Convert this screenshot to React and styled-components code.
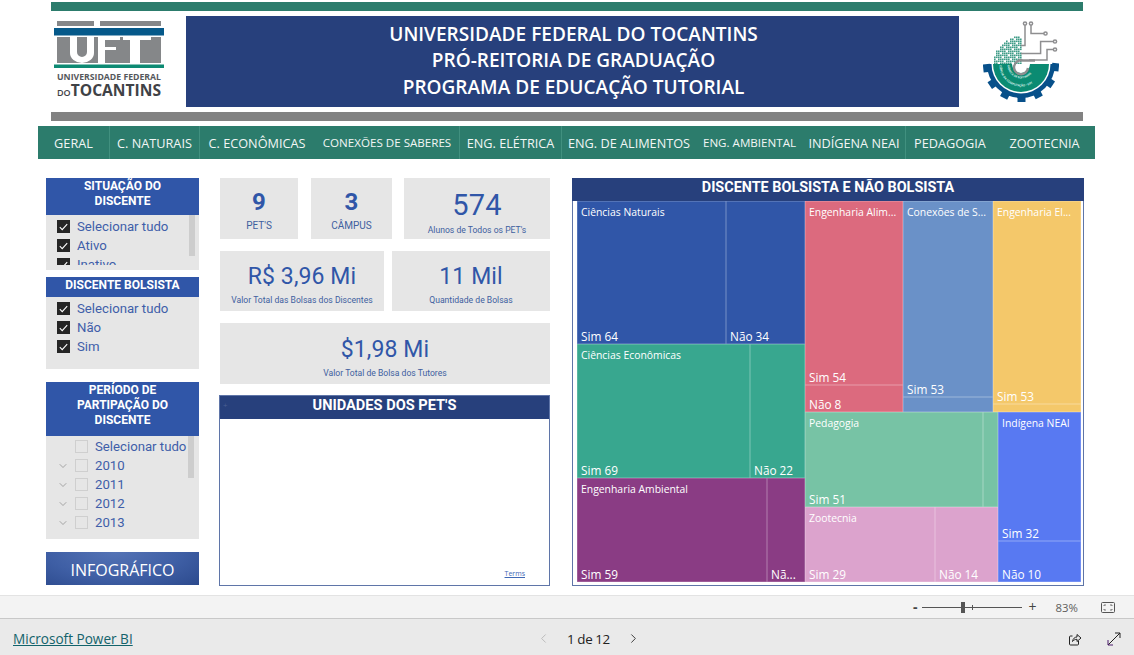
import React from "react";
import styled, { createGlobalStyle } from "styled-components";
import { ChevronDown, ChevronLeft, ChevronRight } from "lucide-react";

const GlobalStyle = createGlobalStyle`
  html, body {
    margin: 0;
    height: 100%;
    overflow: hidden;
    background: #fff;
    font-family: "Open Sans", "Liberation Sans", sans-serif;
  }
  * { box-sizing: border-box; }
`;

const NAVY = "#27407c";
const BLUE = "#3056a8";
const GREEN = "#2c7c6c";
const DIN = `"Roboto", "Liberation Sans", sans-serif`;

const Page = styled.div`
  width: 1134px;
  height: 655px;
  display: flex;
  flex-direction: column;
`;

const Report = styled.div`
  height: 595px;
  padding-top: 2px;
  display: flex;
  flex-direction: column;
`;

const Masthead = styled.header`
  width: 1032px;
  height: 119px;
  margin-left: 51px;
  border-top: 9px solid ${GREEN};
  border-bottom: 9px solid #828282;
  padding: 5px 0;
  display: flex;
  align-items: stretch;
`;

const UftLogo = styled.div`
  width: 135px;
  padding: 5px 0 0 3px;
  display: flex;
  flex-direction: column;
`;

const UftName = styled.span`
  width: 110px;
  margin-top: 4px;
  text-align: center;
  font: 700 8.7px/9px "Open Sans", sans-serif;
  color: #55585c;
  white-space: nowrap;
`;

const UftState = styled.span`
  width: 110px;
  margin-top: 1px;
  text-align: center;
  font: 700 15.6px/15px "Open Sans", sans-serif;
  color: #3f4246;
  white-space: nowrap;
  small { font-size: 9px; font-weight: 600; }
`;

const Banner = styled.div`
  width: 773px;
  padding: 0 0 2px 2px;
  background: ${NAVY};
  color: #fff;
  display: flex;
  flex-direction: column;
  align-items: center;
  justify-content: center;
  font-size: 19.06px;
  font-weight: 600;
  line-height: 26.5px;
  text-align: center;
`;

const SideLogo = styled.div`
  flex: 1;
  padding-left: 24px;
  display: flex;
  align-items: center;
`;

const Nav = styled.nav`
  width: 1057px;
  height: 33px;
  margin: 5px 0 0 38px;
  background: ${GREEN};
  display: grid;
  grid-template-columns: 72px 90px 115px 145px 102px 135px 106px 103px 89px 100px;
`;

const NavItem = styled.a`
  display: flex;
  align-items: center;
  justify-content: center;
  color: #f2f6f5;
  font-size: ${(p) => p.$size || 12.7}px;
  white-space: nowrap;
  border-right: 1px solid ${(p) => (p.$sep ? "#41907f" : "transparent")};
`;

const Content = styled.main`
  flex: 1;
  padding: 19px 0 0 46px;
  display: flex;
  align-items: flex-start;
`;

const LeftColumn = styled.div`
  width: 153px;
  display: flex;
  flex-direction: column;
`;

const Slicer = styled.section`
  height: ${(p) => p.$height}px;
  margin-bottom: ${(p) => p.$gap}px;
  background: #e6e6e6;
  display: flex;
  flex-direction: column;
  position: relative;
`;

const SlicerHead = styled.h3`
  margin: 0;
  height: ${(p) => p.$height}px;
  padding-top: 1px;
  flex-shrink: 0;
  background: ${BLUE};
  color: #fff;
  text-align: center;
  font: 700 12px/15px ${DIN};
`;

const SlicerList = styled.ul`
  margin: 0 0 ${(p) => p.$clip}px;
  padding: ${(p) => p.$top}px 0 0;
  list-style: none;
  flex: 1;
  overflow: hidden;
`;

const SlicerRow = styled.li`
  height: 19px;
  padding-left: 11px;
  display: flex;
  align-items: center;
  color: #3f5ea9;
  font: 400 13.2px/19px ${DIN};
  white-space: nowrap;
`;

const Twisty = styled.span`
  width: 18px;
  display: flex;
  color: #777;
`;

const Box = styled.span`
  width: 13px;
  height: 13px;
  margin-right: 7px;
  flex-shrink: 0;
  display: flex;
  align-items: center;
  justify-content: center;
  background: ${(p) => (p.$on ? "#252525" : "transparent")};
  border: 1px solid ${(p) => (p.$on ? "#252525" : "#cfcfcf")};
`;

const Thumb = styled.span`
  position: absolute;
  left: ${(p) => p.$left}px;
  top: ${(p) => p.$top}px;
  width: 6px;
  height: ${(p) => p.$height}px;
  background: #cdcdcd;
`;

const InfoButton = styled.a`
  height: 33px;
  padding-top: 2px;
  display: flex;
  align-items: center;
  justify-content: center;
  color: #fff;
  font: 400 16px "Open Sans", sans-serif;
  background: radial-gradient(ellipse at 45% 0%, #5473b5 0%, #3f5fa5 55%, #2c4a8d 100%);
`;

const MiddleColumn = styled.div`
  width: 331px;
  margin-left: 20px;
  display: flex;
  flex-direction: column;
`;

const CardRow = styled.div`
  height: ${(p) => p.$height}px;
  margin: 0 0 ${(p) => p.$gap}px 1px;
  display: flex;
`;

const Card = styled.div`
  width: ${(p) => p.$width}px;
  margin-right: ${(p) => p.$after || 0}px;
  padding-top: ${(p) => p.$drop || 9}px;
  background: #e6e6e6;
  display: flex;
  flex-direction: column;
  align-items: center;
  justify-content: center;
  color: ${BLUE};
  white-space: nowrap;
`;

const CardValue = styled.div`
  font: ${(p) => (p.$bold ? 700 : 400)} ${(p) => p.$size || 23}px/1 ${DIN};
  letter-spacing: ${(p) => p.$track || 0.1}px;
`;

const CardLabel = styled.div`
  margin-top: ${(p) => p.$top || 6}px;
  font: 400 ${(p) => p.$size || 8.6}px/12px ${DIN};
  color: #40609f;
`;

const MapPanel = styled.section`
  height: 191px;
  border: 1px solid #5f75a8;
  position: relative;
`;

const MapHead = styled.h3`
  margin: 0;
  height: 23px;
  background: ${NAVY};
  color: #fff;
  text-align: center;
  font: 700 14.6px/18px ${DIN};
`;

const MapMark = styled.span`
  position: absolute;
  left: 3px;
  top: 4px;
  color: #4a5f93;
  font: 400 8px/10px "Open Sans", sans-serif;
`;

const Terms = styled.a`
  position: absolute;
  right: 24px;
  bottom: 7px;
  color: #3f68b5;
  font: 400 7px "Open Sans", sans-serif;
  text-decoration: underline;
`;

const TreePanel = styled.section`
  width: 512px;
  height: 408px;
  margin-left: 22px;
  border: 1px solid #5f75a8;
  border-top: 0;
  display: flex;
  flex-direction: column;
`;

const TreeHead = styled.h3`
  height: 23px;
  margin: 0 -1px;
  flex-shrink: 0;
  background: ${NAVY};
  color: #fff;
  text-align: center;
  font: 700 14.4px/20px ${DIN};
`;

const TreeMap = styled.div`
  margin: 0 3px 0 4px;
  height: 381px;
  display: flex;
`;

const Stack = styled.div`
  width: ${(p) => (p.$w ? `${p.$w}px` : "auto")};
  height: ${(p) => (p.$h ? `${p.$h}px` : "auto")};
  flex-shrink: 0;
  display: flex;
  flex-direction: ${(p) => (p.$row ? "row" : "column")};
`;

const Cell = styled.div`
  width: ${(p) => (p.$w ? `${p.$w}px` : "auto")};
  height: ${(p) => (p.$h ? `${p.$h}px` : "auto")};
  flex-shrink: 0;
  background: ${(p) => p.$color};
  box-shadow: inset 0 0 0 0.5px rgba(255, 255, 255, 0.35);
  padding: 4px 4px 0;
  display: flex;
  flex-direction: column;
  justify-content: space-between;
  color: #fff;
  overflow: hidden;
  white-space: nowrap;
`;

const CellTitle = styled.span`
  font-size: 10.4px;
  line-height: 15px;
`;

const CellValue = styled.span`
  font-size: 11.8px;
  line-height: 17px;
  margin-top: auto;
  margin-bottom: -1px;
`;

const ZoomBar = styled.div`
  height: 24px;
  background: #f3f3f3;
  border-top: 1px solid #e3e3e3;
  border-bottom: 1px solid #c8c8c8;
  padding-right: 19px;
  display: flex;
  align-items: center;
  justify-content: flex-end;
  color: #605e5c;
`;

const ZoomSign = styled.span`
  font: ${(p) => (p.$bold ? 700 : 400)} 14px/1 "Open Sans", sans-serif;
  color: #444;
`;

const Slider = styled.span`
  width: 100px;
  height: 1px;
  margin: 0 7px 0 4px;
  background: #555;
  position: relative;
`;

const SliderThumb = styled.span`
  position: absolute;
  left: 39px;
  top: -5px;
  width: 4px;
  height: 11px;
  background: #555;
`;

const SliderTick = styled.span`
  position: absolute;
  left: 50px;
  top: -2px;
  width: 1px;
  height: 5px;
  background: #555;
`;

const ZoomValue = styled.span`
  margin: 0 23px 0 19px;
  font-size: 11.4px;
`;

const Footer = styled.footer`
  flex: 1;
  background: #eaeaea;
  padding: 3px 13px 0;
  display: flex;
  align-items: center;
`;

const BrandLink = styled.a`
  width: 523px;
  color: #13636b;
  font-size: 13.6px;
  text-decoration: underline;
`;

const Pager = styled.div`
  display: flex;
  align-items: center;
  color: #222;
  font-size: 13.4px;
  letter-spacing: -0.4px;
`;

const PageNote = styled.span`
  margin: 0 16px 0 16px;
`;

const FooterIcons = styled.div`
  margin-left: auto;
  display: flex;
  align-items: center;
  gap: 25px;
`;

const check = (
  <svg width="9" height="8" viewBox="0 0 9 8" fill="none">
    <path d="M.8 4.2 3.2 6.6 8.2 1.2" stroke="#fff" strokeWidth="1.1" />
  </svg>
);

function Option({ label, on, tree, twisty }) {
  return (
    <SlicerRow>
      {tree && <Twisty>{twisty && <ChevronDown size={12} strokeWidth={1.2} />}</Twisty>}
      <Box $on={on}>{on && check}</Box>
      {label}
    </SlicerRow>
  );
}

function TreeCell({ w, h, color, title, value }) {
  return (
    <Cell $w={w} $h={h} $color={color}>
      {title && <CellTitle>{title}</CellTitle>}
      {value && <CellValue>{value}</CellValue>}
    </Cell>
  );
}

function UftMark() {
  return (
    <svg width="110" height="48" viewBox="0 0 110 48">
      <rect x="3" y="0" width="37" height="5" fill="#858789" />
      <rect x="46" y="0" width="61" height="5" fill="#858789" />
      <rect x="0" y="7" width="110" height="7.5" fill="#05598a" />
      <rect x="3" y="16" width="104" height="26" fill="#858789" />
      <path d="M16 16h7v15a4 4 0 0 0 10 0V16h7v16a12 10 0 0 1-24 0z" fill="#fff" />
      <path d="M44 16h22v3H51v7h11v3H51v13h-7z" fill="#fff" />
      <path d="M69 16h28v3H86v23H76V19h-7z" fill="#fff" />
      <rect x="0" y="43.5" width="110" height="3.5" fill="#0d8a73" />
    </svg>
  );
}

// escudo da fábrica de software: engrenagem, circuito e malha de pontos
function SoftwareLogo() {
  const teeth = [6, 34, 62, 90, 118, 146, 174];
  const dots = [];
  for (let row = 0; row < 14; row++) {
    for (let col = 0; col < 15; col++) {
      const dx = 14.5 - col;
      const dy = 13.5 - row;
      if (dx * dx + dy * dy * 1.05 < 205 && (row * 3 + col) % 7 !== 0) {
        dots.push(<rect key={`${row}-${col}`} x={9 + col * 2} y={16.5 + row * 2} width="1.6" height="1.6" fill="#3f9c87" />);
      }
    }
  }
  return (
    <svg width="76" height="84" viewBox="0 0 76 84">
      {dots}
      <g stroke="#8e8e90" strokeWidth="1.5" fill="none">
        <path d="M42 5V25.5H38" />
        <path d="M48 5V13.5H61" />
        <path d="M38 33.5H57.6V21.5H70.5" />
        <path d="M46 40H64V29.5H70.5" />
        <circle cx="42" cy="3.5" r="1.6" />
        <circle cx="48" cy="3.5" r="1.6" />
        <circle cx="62.5" cy="13.5" r="1.6" />
        <circle cx="72" cy="21.5" r="1.6" />
        <circle cx="72" cy="29.5" r="1.6" />
      </g>
      <g transform="translate(38 44)">
        {teeth.map((a) => (
          <path key={a} d="M31-4.5H38L38-3V3L38 3.5H31z" fill="#07508a" transform={`rotate(${a})`} />
        ))}
        <path d="M-34 0A34 34 0 0 0 34 0z" fill="#07508a" />
        <path d="M-29.5 0A29.5 29.5 0 0 0 29.5 0z" fill="#fff" />
        <path d="M-28 0A28 28 0 0 0 28 0z" fill="#0b8b72" />
        <path d="M-9 0A9 9 0 0 0 9 0z" fill="#fff" />
        <path d="M14-3.5H2A7 7 0 1 0 7 4" fill="none" stroke="#8e8e90" strokeWidth="2.4" />
        <path id="arcA" d="M-13.5 1A13.5 13.5 0 0 0 13.5 1" fill="none" />
        <path id="arcB" d="M-21.5 1A21.5 21.5 0 0 0 21.5 1" fill="none" />
        <text fontSize="2.9" fontWeight="700" fill="#d8f0ea" fontFamily="Open Sans, sans-serif">
          <textPath href="#arcA">FÁBRICA DE SOFTWARE</textPath>
          <textPath href="#arcB">CIÊNCIA DA COMPUTAÇÃO - UFT</textPath>
        </text>
      </g>
    </svg>
  );
}

const navItems = [
  { label: "GERAL", sep: true },
  { label: "C. NATURAIS", sep: true },
  { label: "C. ECONÔMICAS" },
  { label: "CONEXÕES DE SABERES", size: 11.6, sep: true },
  { label: "ENG. ELÉTRICA", sep: true },
  { label: "ENG. DE ALIMENTOS" },
  { label: "ENG. AMBIENTAL", size: 11.6 },
  { label: "INDÍGENA NEAI", sep: true },
  { label: "PEDAGOGIA" },
  { label: "ZOOTECNIA" },
];

export default function App() {
  return (
    <Page>
      <GlobalStyle />
      <Report>
        <Masthead>
          <UftLogo>
            <UftMark />
            <UftName>UNIVERSIDADE FEDERAL</UftName>
            <UftState><small>DO</small>TOCANTINS</UftState>
          </UftLogo>
          <Banner>
            <div>UNIVERSIDADE FEDERAL DO TOCANTINS</div>
            <div>PRÓ-REITORIA DE GRADUAÇÃO</div>
            <div>PROGRAMA DE EDUCAÇÃO TUTORIAL</div>
          </Banner>
          <SideLogo><SoftwareLogo /></SideLogo>
        </Masthead>
        <Nav>
          {navItems.map((item) => (
            <NavItem key={item.label} $sep={item.sep} $size={item.size}>{item.label}</NavItem>
          ))}
        </Nav>
        <Content>
          <LeftColumn>
            <Slicer $height={92} $gap={7}>
              <SlicerHead $height={37}>SITUAÇÃO DO<br />DISCENTE</SlicerHead>
              <SlicerList $top={2} $clip={5}>
                <Option label="Selecionar tudo" on />
                <Option label="Ativo" on />
                <Option label="Inativo" on />
              </SlicerList>
              <Thumb $left={143} $top={37} $height={41} />
            </Slicer>
            <Slicer $height={92} $gap={13}>
              <SlicerHead $height={20}>DISCENTE BOLSISTA</SlicerHead>
              <SlicerList $top={2} $clip={0}>
                <Option label="Selecionar tudo" on />
                <Option label="Não" on />
                <Option label="Sim" on />
              </SlicerList>
            </Slicer>
            <Slicer $height={157} $gap={13}>
              <SlicerHead $height={54}>PERÍODO DE<br />PARTIPAÇÃO DO<br />DISCENTE</SlicerHead>
              <SlicerList $top={1} $clip={4}>
                <Option label="Selecionar tudo" tree />
                <Option label="2010" tree twisty />
                <Option label="2011" tree twisty />
                <Option label="2012" tree twisty />
                <Option label="2013" tree twisty />
                <Option tree />
              </SlicerList>
              <Thumb $left={142} $top={54} $height={42} />
            </Slicer>
            <InfoButton>INFOGRÁFICO</InfoButton>
          </LeftColumn>

          <MiddleColumn>
            <CardRow $height={61} $gap={12}>
              <Card $width={78} $after={13} $drop={4}>
                <CardValue $bold $size={24} $track={0}>9</CardValue>
                <CardLabel $size={10} $top={6}>PET'S</CardLabel>
              </Card>
              <Card $width={81} $after={12} $drop={4}>
                <CardValue $bold $size={24} $track={0}>3</CardValue>
                <CardLabel $size={10} $top={6}>CÂMPUS</CardLabel>
              </Card>
              <Card $width={146} $drop={10}>
                <CardValue $size={29} $track={0.2}>574</CardValue>
                <CardLabel $top={4}>Alunos de Todos os PET's</CardLabel>
              </Card>
            </CardRow>
            <CardRow $height={60} $gap={12}>
              <Card $width={164} $after={8}>
                <CardValue>R$ 3,96 Mi</CardValue>
                <CardLabel>Valor Total das Bolsas dos Discentes</CardLabel>
              </Card>
              <Card $width={158}>
                <CardValue>11 Mil</CardValue>
                <CardLabel>Quantidade de Bolsas</CardLabel>
              </Card>
            </CardRow>
            <CardRow $height={61} $gap={11}>
              <Card $width={330}>
                <CardValue>$1,98 Mi</CardValue>
                <CardLabel>Valor Total de Bolsa dos Tutores</CardLabel>
              </Card>
            </CardRow>
            <MapPanel>
              <MapHead>UNIDADES DOS PET'S</MapHead>
              <MapMark>+</MapMark>
              <Terms>Terms</Terms>
            </MapPanel>
          </MiddleColumn>

          <TreePanel>
            <TreeHead>DISCENTE BOLSISTA E NÃO BOLSISTA</TreeHead>
            <TreeMap>
              <Stack $w={228}>
                <Stack $row $h={143}>
                  <TreeCell w={149} color="#3056a8" title="Ciências Naturais" value="Sim 64" />
                  <TreeCell w={79} color="#3056a8" value="Não 34" />
                </Stack>
                <Stack $row $h={134}>
                  <TreeCell w={173} color="#38a78f" title="Ciências Econômicas" value="Sim 69" />
                  <TreeCell w={55} color="#38a78f" value="Não 22" />
                </Stack>
                <Stack $row $h={104}>
                  <TreeCell w={190} color="#8a3c84" title="Engenharia Ambiental" value="Sim 59" />
                  <TreeCell w={38} color="#8a3c84" value="Nã..." />
                </Stack>
              </Stack>
              <Stack $w={276}>
                <Stack $row $h={211}>
                  <Stack $w={98}>
                    <TreeCell h={184} color="#dc6a7e" title="Engenharia Alim..." value="Sim 54" />
                    <TreeCell h={27} color="#dc6a7e" value="Não 8" />
                  </Stack>
                  <Stack $w={90}>
                    <TreeCell h={196} color="#6a91c8" title="Conexões de S..." value="Sim 53" />
                    <TreeCell h={15} color="#6a91c8" />
                  </Stack>
                  <Stack $w={88}>
                    <TreeCell h={203} color="#f4c86a" title="Engenharia El..." value="Sim 53" />
                    <TreeCell h={8} color="#f4c86a" />
                  </Stack>
                </Stack>
                <Stack $row $h={170}>
                  <Stack $w={193}>
                    <Stack $row $h={95}>
                      <TreeCell w={178} color="#77c3a5" title="Pedagogia" value="Sim 51" />
                      <TreeCell w={15} color="#77c3a5" />
                    </Stack>
                    <Stack $row $h={75}>
                      <TreeCell w={130} color="#dca3cd" title="Zootecnia" value="Sim 29" />
                      <TreeCell w={63} color="#dca3cd" value="Não 14" />
                    </Stack>
                  </Stack>
                  <Stack $w={83}>
                    <TreeCell h={129} color="#5879f2" title="Indígena NEAI" value="Sim 32" />
                    <TreeCell h={41} color="#5879f2" value="Não 10" />
                  </Stack>
                </Stack>
              </Stack>
            </TreeMap>
          </TreePanel>
        </Content>
      </Report>

      <ZoomBar>
        <ZoomSign $bold>-</ZoomSign>
        <Slider>
          <SliderThumb />
          <SliderTick />
        </Slider>
        <ZoomSign>+</ZoomSign>
        <ZoomValue>83%</ZoomValue>
        <svg width="14" height="11" viewBox="0 0 14 11" fill="none" stroke="#555">
          <rect x=".5" y=".5" width="13" height="10" rx="1" />
          <path d="M3 4V3h2M11 4V3H9M3 7v1h2M11 7v1H9" strokeWidth=".8" />
        </svg>
      </ZoomBar>

      <Footer>
        <BrandLink>Microsoft Power BI</BrandLink>
        <Pager>
          <ChevronLeft size={15} color="#b5b5b5" strokeWidth={1.4} />
          <PageNote>1 de 12</PageNote>
          <ChevronRight size={15} color="#333" strokeWidth={1.5} />
        </Pager>
        <FooterIcons>
          <svg width="14" height="14" viewBox="0 0 14 14" fill="none" stroke="#222" strokeWidth="1">
            <path d="M10.5 9v3a1 1 0 0 1-1 1h-7a1 1 0 0 1-1-1V5a1 1 0 0 1 1-1h2" />
            <path d="M4.5 9.5C5 6.5 6.8 5 9 5V2.5L13 6 9 9.5V7.3C7.2 7.2 5.8 8 4.5 9.5z" />
          </svg>
          <svg width="14" height="14" viewBox="0 0 14 14" fill="none" strokeWidth="1">
            <path d="M13 1 1 13" stroke="#222" />
            <path d="M8 1h5v5" stroke="#222" />
            <path d="M1 8v5h5" stroke="#4b1a6b" />
          </svg>
        </FooterIcons>
      </Footer>
    </Page>
  );
}
